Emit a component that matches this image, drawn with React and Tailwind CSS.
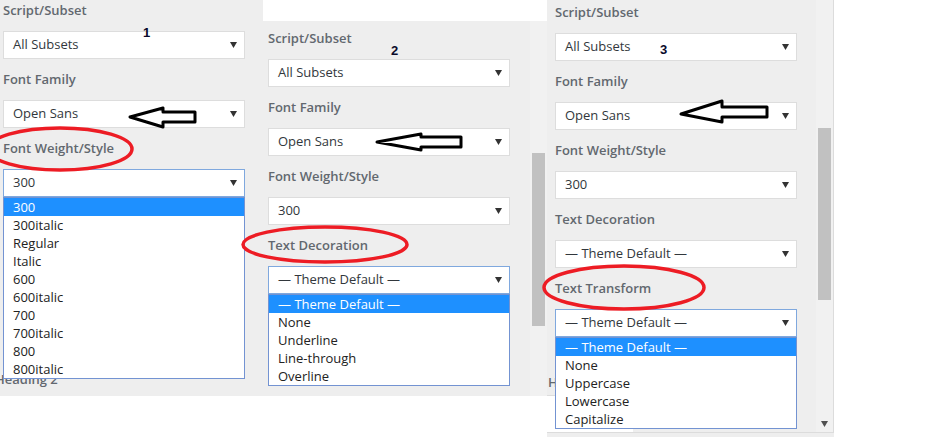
import React from 'react';

// Three customizer screenshots side by side, with red/black annotations on top

const weights = ['300', '300italic', 'Regular', 'Italic', '600', '600italic', '700', '700italic', '800', '800italic'];
const decorations = ['— Theme Default —', 'None', 'Underline', 'Line-through', 'Overline'];
const transforms = ['— Theme Default —', 'None', 'Uppercase', 'Lowercase', 'Capitalize'];

const Caret = ({ color = '#333' }) => (
  <svg width="7" height="6" viewBox="0 0 7 6">
    <polygon points="0,0 7,0 3.5,6" fill={color} />
  </svg>
);

const Label = ({ children, className = '' }) => (
  <div className={`h-[20px] whitespace-nowrap text-[13px] font-semibold leading-[20px] text-[#62686f] ${className}`}>
    {children}
  </div>
);

const Select = ({ value, focused, options }) => (
  <div className={`relative ${options ? 'z-10' : ''}`}>
    <div
      className={`flex h-[28px] w-[242px] items-center justify-between border bg-white pl-[9px] pr-[7px] text-[13px] text-[#32373c] ${
        focused ? 'border-[#7fa8de]' : 'border-[#dddddd]'
      }`}
    >
      <span>{value}</span>
      <Caret />
    </div>
    {options && (
      <ul className="absolute left-0 top-full w-[242px] border border-[#7393d2] bg-white">
        {options.map((o, i) => (
          <li
            key={o}
            className={`h-[18px] pl-[9px] text-[13px] leading-[18px] ${
              i === 0 ? 'bg-[#1e90ff] text-white' : 'text-[#222222]'
            }`}
          >
            {o}
          </li>
        ))}
      </ul>
    )}
  </div>
);

const Field = ({ label, value, focused, options }) => (
  <div className={`flex flex-col ${options ? 'relative z-10' : ''}`}>
    <Label>{label}</Label>
    <div className="mt-[11px]">
      <Select value={value} focused={focused} options={options} />
    </div>
  </div>
);

const Scrollbar = ({ top, height, arrow }) => (
  <div className="relative flex w-[17px] flex-col bg-[#f1f1f1]">
    <div style={{ height: top }} />
    <div className="ml-[2px] w-[13px] bg-[#c1c1c1]" style={{ height }} />
    {arrow && (
      <div className="mt-auto mb-[5px] flex justify-center">
        <Caret color="#505050" />
      </div>
    )}
  </div>
);

export default function App() {
  return (
    <div className="relative flex h-[440px] w-[933px] items-start overflow-hidden bg-white font-['Open_Sans',sans-serif]">
      {/* panel 1 */}
      <div className="flex h-[396px] w-[263px] flex-col overflow-hidden bg-[#eeeeee] pl-[3px]">
        <div className="flex flex-col gap-[10px]">
          <Field label="Script/Subset" value="All Subsets" />
          <Field label="Font Family" value="Open Sans" />
          <Field label="Font Weight/Style" value="300" focused options={weights} />
        </div>
        <Label className="mt-auto mb-[7px] -ml-[8px]">Heading 2</Label>
      </div>

      {/* panel 2 */}
      <div className="mt-[21px] flex h-[375px] w-[284px] bg-[#eeeeee]">
        <div className="flex flex-1 flex-col gap-[10px] pl-[5px] pt-[7px]">
          <Field label="Script/Subset" value="All Subsets" />
          <Field label="Font Family" value="Open Sans" />
          <Field label="Font Weight/Style" value="300" />
          <Field label="Text Decoration" value="— Theme Default —" focused options={decorations} />
        </div>
        <Scrollbar top={132} height={173} />
      </div>

      {/* panel 3 */}
      <div className="flex h-[437px] w-[287px] flex-col bg-[#eeeeee]">
        <div className="flex h-[433px] border-b border-r border-[#dcdcdc]">
          <div className="flex flex-1 flex-col pl-[8px] pt-[2px]">
            <div className="flex flex-col gap-[10px]">
              <Field label="Script/Subset" value="All Subsets" />
              <Field label="Font Family" value="Open Sans" />
              <Field label="Font Weight/Style" value="300" />
              <Field label="Text Decoration" value="— Theme Default —" />
              <Field label="Text Transform" value="— Theme Default —" focused options={transforms} />
            </div>
            <Label className="mt-[35px] -ml-[7px]">Heading 2</Label>
            <div className="mt-[3px] -ml-[8px] h-[37px] w-[86px] border-t border-[#dddddd] bg-white" />
          </div>
          <Scrollbar top={128} height={172} arrow />
        </div>
      </div>

      {/* annotation numbers */}
      <span className="absolute left-[143px] top-[26px] z-20 font-['Liberation_Sans',sans-serif] text-[13px] font-bold leading-none text-[#0a0a2a]">1</span>
      <span className="absolute left-[391px] top-[44px] z-20 font-['Liberation_Sans',sans-serif] text-[13px] font-bold leading-none text-[#0a0a2a]">2</span>
      <span className="absolute left-[660px] top-[43px] z-20 font-['Liberation_Sans',sans-serif] text-[13px] font-bold leading-none text-[#0a0a2a]">3</span>

      {/* annotation drawings */}
      <svg className="pointer-events-none absolute left-0 top-0 z-20" width="933" height="440" viewBox="0 0 933 440">
        <g fill="none" stroke="#ed1c24" strokeWidth="3.5">
          <ellipse cx="60" cy="149" rx="72" ry="21" />
          <ellipse cx="325" cy="244.5" rx="82" ry="17.5" />
          <ellipse cx="624" cy="287.5" rx="80" ry="21.5" />
        </g>
        <g fill="none" stroke="#000" strokeWidth="3" strokeLinejoin="round">
          <polygon points="130,117 163,108 163,112 195,112 195,122 163,122 163,127" />
          <polygon points="377,142 421,134 421,137 461,137 461,147 421,147 421,150" />
          <polygon points="681,114 722,101 722,107 767,107 767,117 722,117 722,122" />
        </g>
      </svg>
    </div>
  );
}
